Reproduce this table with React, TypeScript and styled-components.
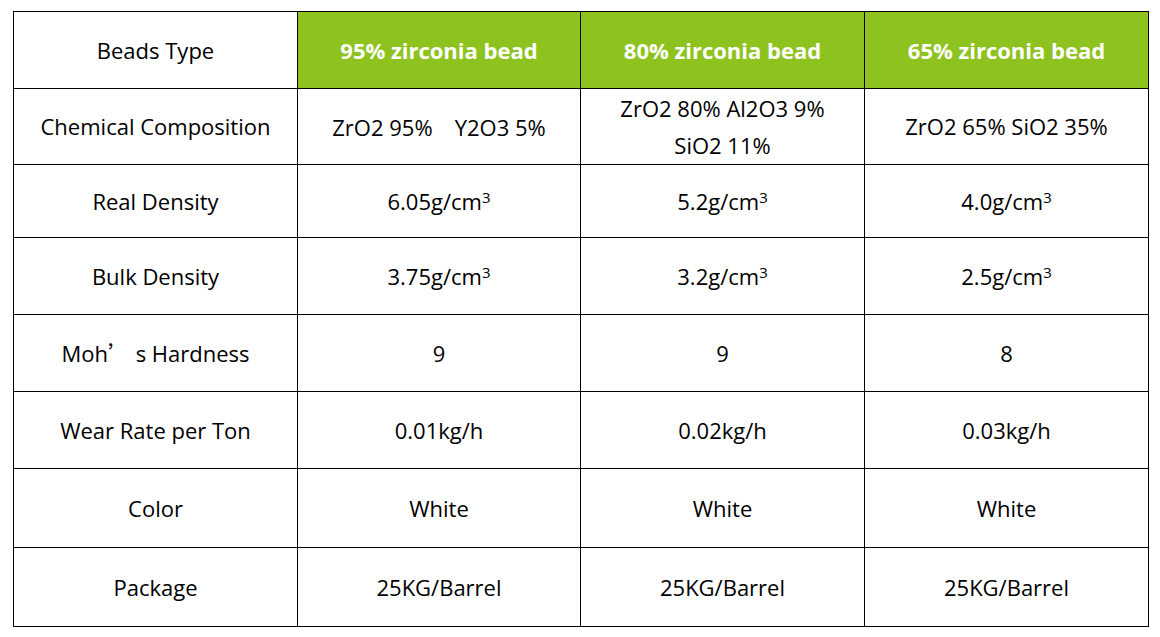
import React from 'react';
import styled, { createGlobalStyle } from 'styled-components';

const GlobalStyle = createGlobalStyle`
  html, body {
    margin: 0;
    padding: 0;
    background: #ffffff;
  }
`;

const Page = styled.div`
  padding: 11px 0 0 13px;
`;

const Table = styled.table`
  border-collapse: collapse;
  table-layout: fixed;
  width: 1135px;
  font-family: "Open Sans", "Noto Sans CJK SC", sans-serif;
  font-size: 22px;
  color: #000;
`;

const Row = styled.tr<{ $h: number }>`
  height: ${(p) => p.$h}px;
`;

const Cell = styled.td`
  border: 1px solid #000;
  text-align: center;
  vertical-align: middle;
  padding: 0 8px;
  line-height: 37px;
`;

const HeadCell = styled(Cell)<{ $green?: boolean }>`
  background: ${(p) => (p.$green ? '#8ec31f' : '#fff')};
  color: ${(p) => (p.$green ? '#fff' : '#000')};
  font-weight: ${(p) => (p.$green ? 700 : 400)};
`;

const Wide = styled.span`
  font-family: "Noto Sans CJK SC", sans-serif;
`;

const Sup = styled.span`
  font-size: 15px;
  vertical-align: 7px;
  line-height: 0;
`;

const cube = (n: string) => (
  <>
    {n}g/cm<Sup>3</Sup>
  </>
);

const header = ['95% zirconia bead', '80% zirconia bead', '65% zirconia bead'];

const rows: { label: React.ReactNode; values: React.ReactNode[]; h: number }[] = [
  {
    label: 'Chemical Composition',
    values: [
      <>ZrO2 95%<Wide>{'\u3000'}</Wide>Y2O3 5%</>,
      <>ZrO2 80% Al2O3 9%<br />SiO2 11%</>,
      'ZrO2 65% SiO2 35%',
    ],
    h: 76,
  },
  { label: 'Real Density', values: [cube('6.05'), cube('5.2'), cube('4.0')], h: 73 },
  { label: 'Bulk Density', values: [cube('3.75'), cube('3.2'), cube('2.5')], h: 77 },
  {
    label: <>Moh<Wide>’</Wide> s Hardness</>,
    values: ['9', '9', '8'],
    h: 77,
  },
  { label: 'Wear Rate per Ton', values: ['0.01kg/h', '0.02kg/h', '0.03kg/h'], h: 77 },
  { label: 'Color', values: ['White', 'White', 'White'], h: 79 },
  { label: 'Package', values: ['25KG/Barrel', '25KG/Barrel', '25KG/Barrel'], h: 79 },
];

const App: React.FC = () => {
  return (
    <Page>
      <GlobalStyle />
      <Table>
        <colgroup>
          <col style={{ width: 284 }} />
          <col style={{ width: 283 }} />
          <col style={{ width: 284 }} />
          <col style={{ width: 284 }} />
        </colgroup>
        <tbody>
          <Row $h={77}>
            <HeadCell>Beads Type</HeadCell>
            {header.map((h) => (
              <HeadCell key={h} $green>
                {h}
              </HeadCell>
            ))}
          </Row>
          {rows.map((r, i) => (
            <Row key={i} $h={r.h}>
              <Cell>{r.label}</Cell>
              {r.values.map((v, j) => (
                <Cell key={j}>{v}</Cell>
              ))}
            </Row>
          ))}
        </tbody>
      </Table>
    </Page>
  );
};

export default App;
